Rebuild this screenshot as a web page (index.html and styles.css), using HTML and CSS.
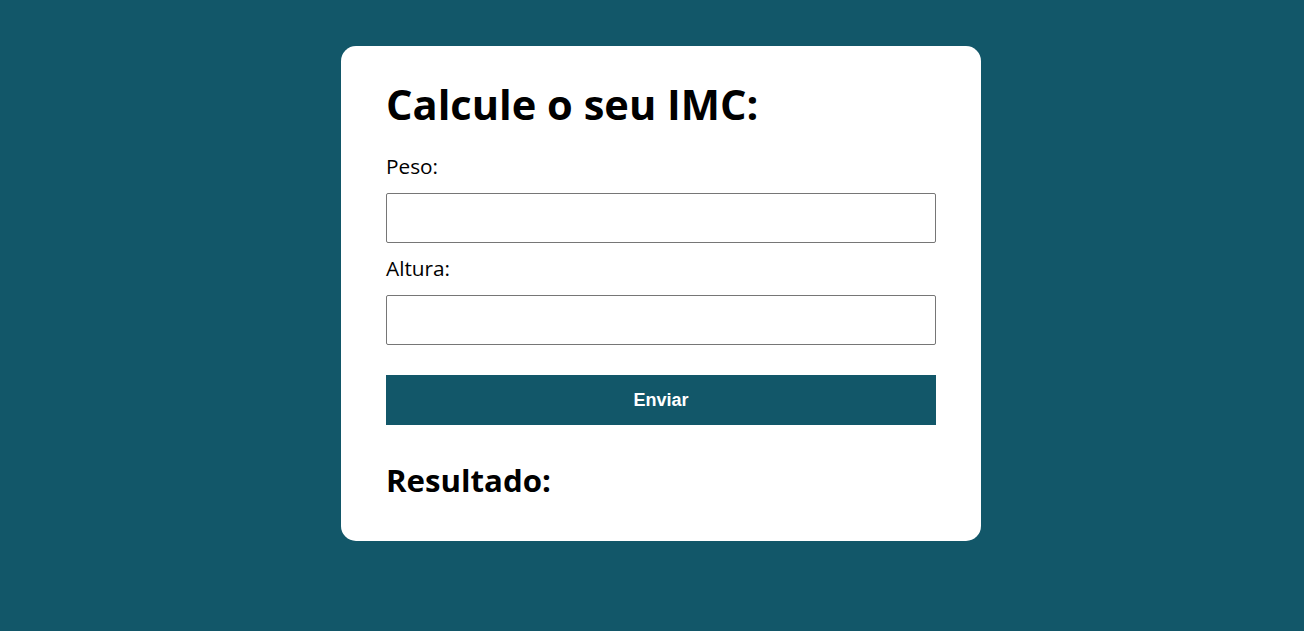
FILE: index.html
```html
<!DOCTYPE html>
<html lang="pt-BR">
<head>
<meta charset="utf-8">
<title>Calculadora de IMC</title>
<link rel="stylesheet" href="styles.css">
</head>
<body>
<main class="card">
  <h1 class="title">Calcule o seu IMC:</h1>
  <form class="form">
    <label class="label" for="peso">Peso:</label>
    <input class="field" id="peso" type="text">
    <label class="label" for="altura">Altura:</label>
    <input class="field" id="altura" type="text">
    <button class="submit" type="button">Enviar</button>
  </form>
  <h2 class="result">Resultado:</h2>
</main>
</body>
</html>
```

FILE: styles.css
```css
html, body {
  margin: 0;
  padding: 0;
}
body {
  background: #125769;
  font-family: "Open Sans", sans-serif;
  color: #000;
  min-height: 631px;
  padding: 46px 0 0 18px;
  box-sizing: border-box;
}
.card {
  width: 640px;
  margin: 0 auto;
  box-sizing: border-box;
  background: #fff;
  border-radius: 15px;
  padding: 30px 45px 40px;
}
.title {
  margin: 0 0 20px;
  font-size: 41.6px;
  font-weight: 700;
  line-height: normal;
}
.form {
  display: flex;
  flex-direction: column;
}
.label {
  font-size: 20.8px;
  font-weight: 400;
  line-height: normal;
  margin-bottom: 13px;
}
.field {
  height: 50px;
  box-sizing: border-box;
  border: 1px solid #767676;
  border-radius: 2px;
  margin: 0 0 11px;
  padding: 0 8px;
  font-size: 16px;
}
.submit {
  margin-top: 19px;
  height: 50px;
  border: 0;
  background: #125769;
  color: #fff;
  font-family: "Liberation Sans", Arial, sans-serif;
  font-weight: 700;
  font-size: 18px;
}
.result {
  margin: 34px 0 0;
  font-size: 31.2px;
  font-weight: 700;
  line-height: normal;
}
```
